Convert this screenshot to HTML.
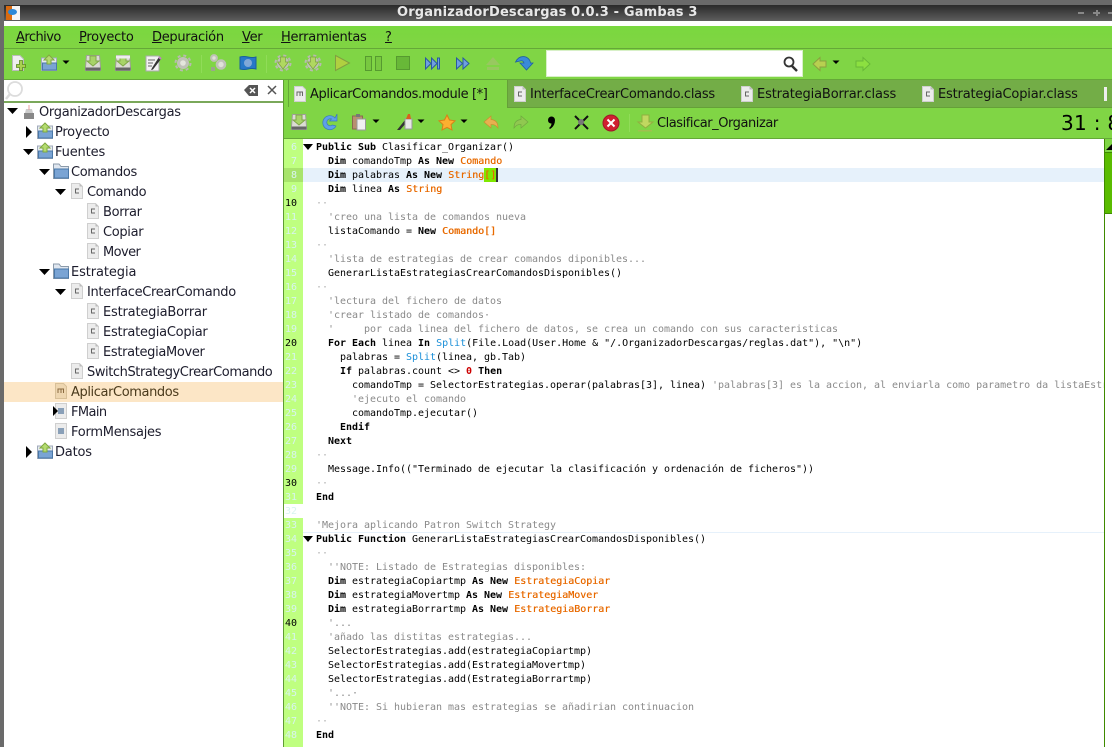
<!DOCTYPE html>
<html><head><meta charset="utf-8">
<style>
html,body{margin:0;padding:0;width:1112px;height:747px;overflow:hidden;background:#fff}
body{position:relative;font-family:"DejaVu Sans","Liberation Sans",sans-serif;font-size:13px;color:#111}
.a{position:absolute}
.t{position:absolute;white-space:pre;line-height:20px}
#title{left:0;top:5px;width:1112px;height:16px;background:linear-gradient(#2a2a2a,#5e5e5e)}
#ttext{position:absolute;left:397px;top:5px;color:#e8e8e8;font-weight:bold;font-size:13px;line-height:15px;letter-spacing:.16px;white-space:pre}
.menu span{position:absolute;top:30px;line-height:15px;white-space:pre;color:#111}
.menu u{text-decoration:underline}
.tree div{position:absolute;white-space:pre;line-height:20px;height:20px;color:#1c1c2c}
#code,#nums{position:absolute;top:141px;font-family:"DejaVu Sans Mono","Liberation Mono",monospace;font-size:10px;line-height:14px;white-space:pre;letter-spacing:-.02px}
#code{left:316px;color:#000;width:788px;overflow:hidden;height:606px}
#nums{left:284px;width:13px;text-align:right;color:#d8f4f0;height:606px;overflow:hidden}
#nums b{font-weight:normal;color:#000}
#code b{color:#000}
#code i{font-style:normal;color:#e86a00;text-shadow:.3px 0 0 #e86a00}
#code em{font-style:normal;color:#8a8a8a}
#code s{text-decoration:none;color:#1a8fd8}
#code u{text-decoration:none;color:#b0b0b0}
svg{position:absolute;left:0;top:0}
</style></head><body>
<!-- chrome -->
<div class="a" style="left:0;top:0;width:1112px;height:5px;background:#6a6a6a"></div>
<div class="a" style="left:0;top:0;width:4px;height:747px;background:#6a6a6a"></div>
<div class="a" id="title"></div>
<div id="ttext">OrganizadorDescargas 0.0.3 - Gambas 3</div>
<div class="a" style="left:0;top:5px;width:4px;height:16px;background:#6a6a6a"></div>
<div class="a" style="left:4px;top:21px;width:1108px;height:5px;background:#fff"></div>
<div class="a" style="left:4px;top:26px;width:1108px;height:22px;background:linear-gradient(#7ad83f,#80d443)"></div>
<div class="a" style="left:4px;top:48px;width:1108px;height:1px;background:#65a838"></div>
<div class="a" style="left:4px;top:49px;width:1108px;height:30px;background:#80d545"></div>
<div class="a" style="left:4px;top:79px;width:1108px;height:1px;background:#65a838"></div>
<!-- logo -->
<div class="a" style="left:6px;top:6px;width:6px;height:14px;background:#d86a10"></div>
<div class="a" style="left:12px;top:6px;width:8px;height:14px;background:#f4f4f4"></div>
<div class="a" style="left:8px;top:9px;width:9px;height:6px;border-radius:50%;background:#2a88d8"></div>
<!-- window buttons -->
<div class="a" style="left:1078px;top:12px;width:6px;height:2px;background:#888"></div>
<div class="a" style="left:1093px;top:12px;width:7px;height:2px;background:#888"></div>
<div class="a" style="left:1095.5px;top:10px;width:2px;height:6px;background:#888"></div>
<div class="a" style="left:1108px;top:12px;width:4px;height:2px;background:#888"></div>
<div class="menu">
<span style="left:16px;letter-spacing:-.55px"><u>A</u>rchivo</span>
<span style="left:79px;letter-spacing:-.25px"><u>P</u>royecto</span>
<span style="left:152px;letter-spacing:-.3px"><u>D</u>epuración</span>
<span style="left:242px;letter-spacing:-.33px"><u>V</u>er</span>
<span style="left:281px;letter-spacing:-.25px"><u>H</u>erramientas</span>
<span style="left:385px"><u>?</u></span>
</div>
<!-- search box -->
<div class="a" style="left:546px;top:50px;width:257px;height:27px;background:#fff;border:1px solid #d8f0c8;box-sizing:border-box"></div>
<!-- sidebar -->
<div class="a" style="left:4px;top:80px;width:279px;height:667px;background:#fff"></div>
<div class="a" style="left:4px;top:101px;width:279px;height:2px;background:#7aa85a"></div>
<div class="a" style="left:4px;top:382px;width:279px;height:20px;background:#fce6c6"></div>
<div class="tree">
<div style="left:39px;top:103px;letter-spacing:-.3px">OrganizadorDescargas</div>
<div style="left:55px;top:123px;letter-spacing:-.25px">Proyecto</div>
<div style="left:55px;top:143px;letter-spacing:-.15px">Fuentes</div>
<div style="left:71px;top:163px;letter-spacing:-.37px">Comandos</div>
<div style="left:87px;top:183px;letter-spacing:-.43px">Comando</div>
<div style="left:103px;top:203px;letter-spacing:-.33px">Borrar</div>
<div style="left:103px;top:223px;letter-spacing:-.33px">Copiar</div>
<div style="left:103px;top:243px;letter-spacing:-.6px">Mover</div>
<div style="left:71px;top:263px;letter-spacing:-.1px">Estrategia</div>
<div style="left:87px;top:283px;letter-spacing:-.33px">InterfaceCrearComando</div>
<div style="left:103px;top:303px;letter-spacing:-.19px">EstrategiaBorrar</div>
<div style="left:103px;top:323px;letter-spacing:-.25px">EstrategiaCopiar</div>
<div style="left:103px;top:343px;letter-spacing:-.33px">EstrategiaMover</div>
<div style="left:87px;top:363px;letter-spacing:-.42px">SwitchStrategyCrearComando</div>
<div style="left:71px;top:383px;color:#4a3a1c;letter-spacing:-.4px">AplicarComandos</div>
<div style="left:71px;top:403px;letter-spacing:-.6px">FMain</div>
<div style="left:71px;top:423px;letter-spacing:-.25px">FormMensajes</div>
<div style="left:55px;top:443px;letter-spacing:-.2px">Datos</div>
</div>
<!-- right panel -->
<div class="a" style="left:283px;top:80px;width:829px;height:59px;background:#80d545"></div>
<div class="a" style="left:507px;top:80px;width:605px;height:27px;background:#73ad47"></div>
<div class="a" style="left:507px;top:107px;width:605px;height:1px;background:#65a038"></div>
<div class="a" style="left:507px;top:80px;width:1px;height:28px;background:#65a038"></div>
<div class="a" style="left:283px;top:80px;width:1px;height:667px;background:#5f9c35"></div>
<div class="a" style="left:288px;top:80px;width:1px;height:27px;background:#65a838"></div>
<div class="a" style="left:284px;top:138px;width:828px;height:1px;background:#65a838"></div>
<div class="t" style="left:310px;top:85px;letter-spacing:-.38px">AplicarComandos.module [*]</div>
<div class="t" style="left:530px;top:85px;letter-spacing:-.26px">InterfaceCrearComando.class</div>
<div class="t" style="left:757px;top:85px;letter-spacing:-.14px">EstrategiaBorrar.class</div>
<div class="t" style="left:938px;top:85px;letter-spacing:-.18px">EstrategiaCopiar.class</div>
<div class="t" style="left:657px;top:114px;letter-spacing:-.45px">Clasificar_Organizar</div>
<div class="t" style="left:1061px;top:113px;font-size:20px;line-height:21px;color:#000;letter-spacing:.3px">31 : 8</div>
<!-- editor -->
<div class="a" style="left:284px;top:139px;width:828px;height:608px;background:#fff"></div>
<div class="a" style="left:284px;top:139px;width:19px;height:608px;background:#bfff80"></div>
<div class="a" style="left:284px;top:504px;width:19px;height:14px;background:#fff"></div>
<div class="a" style="left:284px;top:168px;width:19px;height:14px;background:#a8e46c"></div>
<div class="a" style="left:303px;top:168px;width:802px;height:14px;background:#e6f1fb"></div>
<div class="a" style="left:303px;top:532px;width:802px;height:1px;background:#e6f1fb"></div>
<div class="a" style="left:484px;top:168px;width:12px;height:14px;background:#7fe800"></div>
<div class="a" style="left:496px;top:168px;width:2px;height:14px;background:#333"></div>
<div id="nums">6
7
8
9
<b>10</b>
11
12
13
14
15
16
17
18
19
<b>20</b>
21
22
23
24
25
26
27
28
29
<b>30</b>
31
32
33
34
35
36
37
38
39
<b>40</b>
41
42
43
44
45
46
47
48</div>
<div id="code"><b>Public Sub</b> Clasificar_Organizar()
  <b>Dim</b> comandoTmp <b>As New</b> <i>Comando</i>
  <b>Dim</b> palabras <b>As New</b> <i>String[]</i>
  <b>Dim</b> linea <b>As</b> <i>String</i>
<u>··</u>
  <em>'creo una lista de comandos nueva</em>
  listaComando = <b>New</b> <i>Comando[]</i>
<u>··</u>
  <em>'lista de estrategias de crear comandos diponibles...</em>
  GenerarListaEstrategiasCrearComandosDisponibles()
<u>··</u>
  <em>'lectura del fichero de datos</em>
  <em>'crear listado de comandos·</em>
  <em>'     por cada linea del fichero de datos, se crea un comando con sus caracteristicas</em>
  <b>For Each</b> linea <b>In</b> <s>Split</s>(File.Load(User.Home &amp; "/.OrganizadorDescargas/reglas.dat"), "\n")
    palabras = <s>Split</s>(linea, gb.Tab)
    <b>If</b> palabras.count &lt;&gt; <span style="color:#c00;font-weight:bold">0</span> <b>Then</b>
      comandoTmp = SelectorEstrategias.operar(palabras[3], linea) <em>'palabras[3] es la accion, al enviarla como parametro da listaEstrategias</em>
      <em>'ejecuto el comando</em>
      comandoTmp.ejecutar()
    <b>Endif</b>
  <b>Next</b>
<u>··</u>
  Message.Info(("Terminado de ejecutar la clasificación y ordenación de ficheros"))
<u>··</u>
<b>End</b>

<em>'Mejora aplicando Patron Switch Strategy</em>
<b>Public Function</b> GenerarListaEstrategiasCrearComandosDisponibles()
<u>··</u>
  <em>''NOTE: Listado de Estrategias disponibles:</em>
  <b>Dim</b> estrategiaCopiartmp <b>As New</b> <i>EstrategiaCopiar</i>
  <b>Dim</b> estrategiaMovertmp <b>As New</b> <i>EstrategiaMover</i>
  <b>Dim</b> estrategiaBorrartmp <b>As New</b> <i>EstrategiaBorrar</i>
  <em>'...</em>
  <em>'añado las distitas estrategias...</em>
  SelectorEstrategias.add(estrategiaCopiartmp)
  SelectorEstrategias.add(EstrategiaMovertmp)
  SelectorEstrategias.add(EstrategiaBorrartmp)
  <em>'...·</em>
  <em>''NOTE: Si hubieran mas estrategias se añadirian continuacion</em>
<u>··</u>
<b>End</b></div>
<!-- scrollbar -->
<div class="a" style="left:1104px;top:139px;width:8px;height:608px;background:#fff"></div>
<div class="a" style="left:1104px;top:139px;width:1px;height:608px;background:#3f8a00"></div>
<div class="a" style="left:1105px;top:153px;width:7px;height:60px;background:#5abc00"></div>
<div class="a" style="left:1105px;top:139px;width:7px;height:14px;background:#7fd545;border-bottom:1px solid #3f8a00;box-sizing:border-box"></div>
<div class="a" style="left:1105px;top:213px;width:7px;height:1px;background:#3f8a00"></div>
<svg width="1112" height="747" viewBox="0 0 1112 747">
<defs>
<g id="cls"><path d="M-5.5-7.5H2.5L5.5-4.5V7.5H-5.5Z" fill="#ececec" stroke="#cfcfcf"/><path d="M2.5-7.5V-4.5H5.5Z" fill="#bbb"/><path d="M2-2H-1.5V2H2" fill="none" stroke="#666" stroke-width="1"/></g>
<g id="mod"><path d="M-5.5-7.5H2.5L5.5-4.5V7.5H-5.5Z" fill="#ececec" stroke="#cfcfcf"/><path d="M-3 2V-2H2.5V2M0-2V2" fill="none" stroke="#666"/></g>
<g id="fold"><path d="M-7.5-4.5V-7H-2L0-4.5H7.5V7.5H-7.5Z" fill="#dfe6ef" stroke="#8b9aaa"/><rect x="-6.5" y="-2" width="14" height="9" fill="#7aa4d4" stroke="#4a78a8"/></g>
<g id="prj"><path d="M-7.5-3V-5H7.5V7.5H-7.5Z" fill="#e8ecf2" stroke="#a0aaba"/><rect x="-6.5" y="0" width="14" height="7" fill="#7aa4d4" stroke="#4a78a8"/><path d="M0-8L5-3H2V1H-2V-3H-5Z" fill="#b4dc70" stroke="#80a840"/></g>
<g id="save"><path d="M-6.5-7.5H6.5L7.5 4V7.5H-7.500V4Z" fill="#dcdcd4" stroke="#a0a098"/><rect x="-7.5" y="4.500" width="15" height="3" fill="#666"/><path d="M-3-7H3V-2H6L0 3L-6-2H-3Z" fill="#a8d468" stroke="#80a848"/></g>
<g id="gear"><circle r="7.500" fill="none" stroke="#b8bab0" stroke-width="2" stroke-dasharray="3 2.9"/><circle r="6" fill="#c0c2b8"/><circle r="2.800" fill="#e4e6dc"/></g>
<g id="gearg"><use href="#gear"/><path d="M-2.5-6H2.5V-1H5.500L0 6L-5.500-1H-2.5Z" fill="#b0d860" stroke="#7ba040" stroke-width=".7"/></g>
<path id="dd" d="M-3.5-1.5H3.5L0 2Z" fill="#000"/>
</defs>
<!-- main toolbar -->
<g transform="translate(18,63)"><path d="M-5.5-7.5H2L5.5-4V7.5H-5.5Z" fill="#efefef" stroke="#bbb"/><path d="M2-2H5V2H8V5H5V8H2V5H-1V2H2Z" fill="#a8d050" stroke="#5a8a20" stroke-width=".8" transform="translate(-.5,-.5)"/></g>
<use href="#prj" transform="translate(49,63)"/><use href="#dd" transform="translate(66,62)"/>
<use href="#save" transform="translate(93,63)"/>
<g transform="translate(123,63)"><use href="#save"/><rect x="-7" y="-7.5" width="14" height="3" fill="#eee"/></g>
<g transform="translate(153,63)"><rect x="-7" y="-7" width="13" height="15" fill="#f2f2f2" stroke="#aaa"/><path d="M-5-3H2M-5 0H0M-5 3H-1" stroke="#666"/><path d="M-1 5L-2 7L0 6.5L8-4L6-6Z" fill="#333"/><path d="M6-6L8-4" stroke="#c080c0" stroke-width="2"/></g>
<use href="#gear" transform="translate(183,63)"/>
<rect x="201" y="55" width="1" height="18" fill="#90dc58"/>
<g transform="translate(218,63)"><circle cx="-4" cy="-5" r="2.8" fill="#e0e2d8" stroke="#c0c2b8" stroke-width="2.2"/><circle cx="3" cy="1.5" r="4" fill="#e0e2d8" stroke="#c0c2b8" stroke-width="2.6"/><rect x="-7" y="4" width="4" height="4" fill="#9aa88a"/></g>
<g transform="translate(248,63)"><path d="M-8-6Q-4-7 0-6T8-6V6Q4 5 0 6T-8 6Z" fill="#2878c8" stroke="#1a5fa0"/><circle r="4" fill="#80a8d8"/></g>
<rect x="266" y="55" width="1" height="18" fill="#90dc58"/>
<use href="#gearg" transform="translate(283,63)"/>
<use href="#gearg" transform="translate(313,63)"/>
<path d="M335.5 55.5L349.5 63L335.5 70.5Z" fill="#b0d040" stroke="#80a040"/>
<g fill="#78c840" stroke="#569a30"><rect x="365.5" y="56.5" width="6" height="14"/><rect x="375.5" y="56.5" width="6" height="14"/><rect x="396.5" y="56.5" width="13" height="13" fill="#68b838"/></g>
<g fill="#6fa0e0" stroke="#2a5aa0"><path d="M425.5 58L431 63.5L425.5 69Z"/><path d="M431.5 58L437 63.5L431.5 69Z"/><rect x="437.5" y="58" width="2" height="11"/><path d="M456.5 58L462.5 63.5L456.5 69Z"/><path d="M463 58L469 63.5L463 69Z"/></g>
<path d="M493 57L500 65H486Z" fill="#98c860"/><rect x="487" y="67" width="12" height="3" fill="#98c860"/>
<path d="M515.5 62Q519 55 526 57Q530 59 530.500 63H533L526.500 70L520 63H524Q523 60 520 61Z" fill="#3a8ad8" stroke="#20609f" stroke-width=".8"/>
<circle cx="789" cy="62" r="4.500" fill="none" stroke="#333" stroke-width="1.800"/><path d="M792 66L797 71" stroke="#333" stroke-width="2.500"/>
<path d="M813 64L820 57.500V61H826V67H820V70.500Z" fill="#b8d050" stroke="#8aa040"/><use href="#dd" transform="translate(836,62)"/>
<path d="M870 64L863 57.500V61H856V67H863V70.500Z" fill="#8ce040" stroke="#68b838"/>
<!-- sidebar search -->
<circle cx="15" cy="89" r="7" fill="none" stroke="#dcdcdc" stroke-width="1.800"/><path d="M10 94L6 99" stroke="#dcdcdc" stroke-width="2.500"/>
<path d="M244 90L249 85H258V96H249Z" fill="#555"/><path d="M250 88L255 93M255 88L250 93" stroke="#fff" stroke-width="1.500"/>
<path d="M268 86L276 94M276 86L268 94" stroke="#555" stroke-width="1.500"/>
<!-- tree -->
<g fill="#000">
<path d="M7 108H18L12.500 114Z"/><path d="M26 126V138L32 132Z"/><path d="M23 149H34L28.500 155Z"/><path d="M39 169H50L44.500 175Z"/><path d="M55 189H66L60.500 195Z"/><path d="M39 269H50L44.500 275Z"/><path d="M55 289H66L60.500 295Z"/><path d="M26 446V458L32 452Z"/>
</g>
<g transform="translate(29,112)"><rect x="-5" y="1" width="10" height="6" fill="#888"/><path d="M-4 1L-3-3H3L4 1Z" fill="#ccc"/><path d="M0-7V-2" stroke="#e8a0a0"/></g>
<use href="#prj" transform="translate(45,131)"/><use href="#prj" transform="translate(45,151)"/>
<use href="#fold" transform="translate(61,171)"/><use href="#fold" transform="translate(61,271)"/>
<use href="#cls" transform="translate(77,191)"/>
<use href="#cls" transform="translate(93,211)"/><use href="#cls" transform="translate(93,231)"/><use href="#cls" transform="translate(93,251)"/>
<use href="#cls" transform="translate(77,291)"/>
<use href="#cls" transform="translate(93,311)"/><use href="#cls" transform="translate(93,331)"/><use href="#cls" transform="translate(93,351)"/>
<use href="#cls" transform="translate(77,371)"/>
<g transform="translate(61,391)"><path d="M-5.500-7.500H2.500L5.500-4.500V7.500H-5.500Z" fill="#eed6b0" stroke="#d8c098"/><path d="M-3 2V-2H2.500V2M0-2V2" fill="none" stroke="#8a6a40"/></g>
<g transform="translate(61,411)"><path d="M-5.500-7.500H5.500V7.500H-5.500Z" fill="#ececec" stroke="#cfcfcf"/><rect x="-3" y="-3" width="6" height="6" fill="#8aa0b8"/></g>
<path d="M53 406V416L58 411Z" fill="#000"/>
<g transform="translate(61,431)"><path d="M-5.500-7.500H5.500V7.500H-5.500Z" fill="#ececec" stroke="#cfcfcf"/><rect x="-3" y="-3" width="6" height="6" fill="#8aa0b8"/></g>
<use href="#prj" transform="translate(45,451)"/>
<!-- tabs -->
<use href="#mod" transform="translate(300,94)"/>
<use href="#cls" transform="translate(520,94)"/>
<use href="#cls" transform="translate(747,94)"/>
<use href="#cls" transform="translate(928,94)"/>
<rect x="1104" y="87" width="3" height="14" fill="#eee"/>
<!-- editor toolbar -->
<use href="#save" transform="translate(299,122)"/>
<path d="M335 118A7 7 0 1 0 336 126L332.500 125A3.500 3.500 0 1 1 331.500 119L329.500 121H337V114Z" fill="#5fa0e8" stroke="#3a78c0" stroke-width=".7"/>
<g transform="translate(359,122)"><rect x="-6.500" y="-6" width="10" height="13" fill="#b89070" stroke="#8a6a50"/><rect x="-3" y="-8" width="4" height="3" fill="#777"/><rect x="-2" y="-3" width="8.500" height="11" fill="#f0f0f0" stroke="#999"/></g>
<use href="#dd" transform="translate(376,121)"/>
<g transform="translate(405,122)"><path d="M-8 8L0-2L2 0L-5 8Z" fill="#333"/><rect x="0" y="-3" width="7" height="10" fill="#e8e8e8" stroke="#999"/><path d="M1-3L3-8H5L6-3Z" fill="#d86020"/></g>
<use href="#dd" transform="translate(421,121)"/>
<path d="M447 115L449.500 120L455 120.800L451 124.600L452 130L447 127.400L442 130L443 124.600L439 120.800L444.500 120Z" fill="#fbb030" stroke="#d88018"/>
<use href="#dd" transform="translate(464,121)"/>
<path d="M484 122L491 116V119.500Q498 120 498 128Q495 124 491 124.500V128Z" fill="#e8b050" stroke="#c89030" stroke-width=".7"/>
<path d="M528 122L521 116V119.500Q514 120 514 128Q517 124 521 124.500V128Z" fill="#90c850" stroke="#70a840" stroke-width=".7"/>
<path d="M548 120a3.500 3.500 0 1 1 7 0q0 6-5 9l-1-1q2.500-2 2.500-4.500q-3.500 0-3.500-3.500z" fill="#000"/>
<path d="M575 116L588 129M588 116L575 129" stroke="#111" stroke-width="2"/><circle cx="581" cy="122" r="3" fill="#777"/>
<circle cx="611" cy="123" r="8" fill="#d02030" stroke="#a01828"/><path d="M607.500 119.500L614.500 126.500M614.500 119.500L607.500 126.500" stroke="#fff" stroke-width="2"/>
<rect x="629" y="114" width="1" height="18" fill="#90dc58"/>
<path d="M642 115H649V122H653L645.500 128L638 122H642Z" fill="#c0d860" stroke="#90b040"/><rect x="638" y="130" width="14" height="1.500" fill="#a0c050"/>
<!-- code fold markers -->
<path d="M303 144H313L308 150Z" fill="#000"/>
<path d="M303 536H313L308 542Z" fill="#000"/>
<!-- scroll arrow -->
<path d="M1106 150L1112 144V150Z" fill="#000"/>
</svg>
</body></html>
